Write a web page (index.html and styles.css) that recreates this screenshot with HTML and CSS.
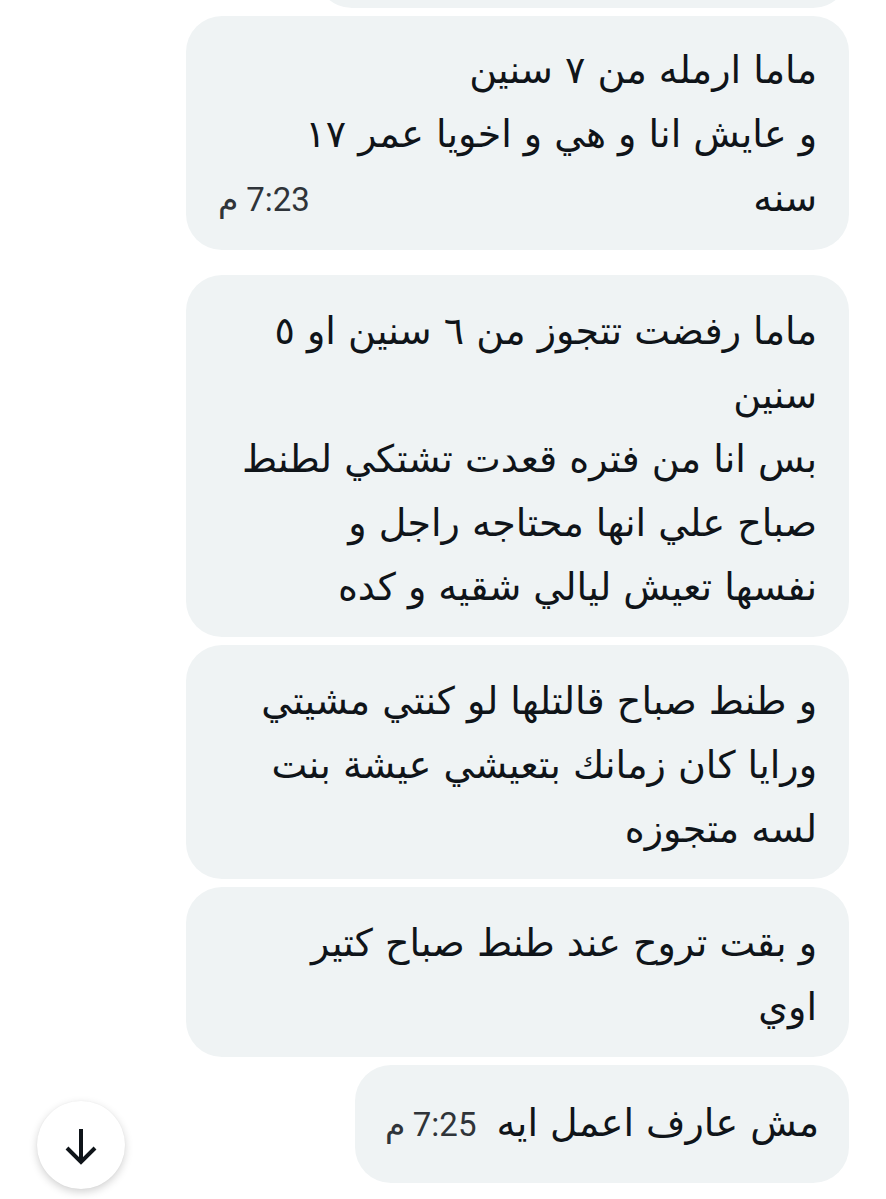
FILE: index.html
```html
<!DOCTYPE html>
<html lang="ar" dir="rtl">
<head>
<meta charset="utf-8">
<title>Chat</title>
<link rel="stylesheet" href="styles.css">
</head>
<body>
<main class="chat">
  <div class="bubble prev"></div>

  <div class="bubble wide first">
    <div class="line">ماما ارمله من ٧ سنين</div>
    <div class="line">و عايش انا و هي و اخويا عمر ١٧</div>
    <div class="line last"><span>سنه</span><span class="time">7:23 م</span></div>
  </div>

  <div class="group">
    <div class="bubble wide">
      <div class="line">ماما رفضت تتجوز من ٦ سنين او ٥</div>
      <div class="line">سنين</div>
      <div class="line">بس انا من فتره قعدت تشتكي لطنط</div>
      <div class="line">صباح علي انها محتاجه راجل و</div>
      <div class="line">نفسها تعيش ليالي شقيه و كده</div>
    </div>

    <div class="bubble wide">
      <div class="line">و طنط صباح قالتلها لو كنتي مشيتي</div>
      <div class="line">ورايا كان زمانك بتعيشي عيشة بنت</div>
      <div class="line">لسه متجوزه</div>
    </div>

    <div class="bubble wide">
      <div class="line">و بقت تروح عند طنط صباح كتير</div>
      <div class="line">اوي</div>
    </div>

    <div class="bubble single">
      <div class="line last inline"><span>مش عارف اعمل ايه</span><span class="time">7:25 م</span></div>
    </div>
  </div>
</main>

<button class="scroll-down" aria-label="scroll down">
  <svg width="88" height="88" viewBox="0 0 88 88" fill="none" stroke="#0f1419" stroke-width="4" stroke-linecap="butt" stroke-linejoin="miter">
    <path d="M44 28 V61"/>
    <path d="M30 47 L44 61 L58 47"/>
  </svg>
</button>
</body>
</html>
```

FILE: styles.css
```css
* { box-sizing: border-box; }

html, body {
  margin: 0;
  padding: 0;
  background: #ffffff;
}

body {
  width: 886px;
  height: 1199px;
  overflow: hidden;
  font-family: "DejaVu Sans", "Noto Sans", sans-serif;
  color: #0f1419;
}

.chat {
  display: flex;
  flex-direction: column;
  align-items: flex-start;
  gap: 8px;
  padding: 0 37px 0 0;
}

.group {
  display: flex;
  flex-direction: column;
  align-items: flex-start;
  gap: 8px;
  margin-top: 17px;
}

.bubble {
  background: #eff3f4;
  border-radius: 36px;
  padding: 24px 32px 18px 32px;
  max-width: 663px;
}

.bubble.prev {
  width: 533px;
  height: 100px;
  margin-top: -92px;
  padding: 0;
}

.bubble.first {
  padding-top: 22px;
}

.bubble.wide {
  width: 663px;
}

.bubble.single {
  padding: 26px 30px 26px 30px;
}

.line {
  font-size: 38px;
  line-height: 64px;
  white-space: nowrap;
}

.line.last {
  display: flex;
  justify-content: space-between;
  align-items: baseline;
}

.line.inline {
  justify-content: flex-start;
  gap: 20px;
}

.time {
  font-family: Roboto, "Liberation Sans", sans-serif;
  font-size: 33px;
  color: #2f3439;
}

.scroll-down {
  position: fixed;
  left: 37px;
  bottom: 10px;
  width: 88px;
  height: 88px;
  padding: 0;
  border: none;
  border-radius: 50%;
  background: #ffffff;
  box-shadow: 0 3px 8px rgba(0, 0, 0, 0.18), 0 0 2px rgba(0, 0, 0, 0.06);
  display: flex;
  align-items: center;
  justify-content: center;
}
```
